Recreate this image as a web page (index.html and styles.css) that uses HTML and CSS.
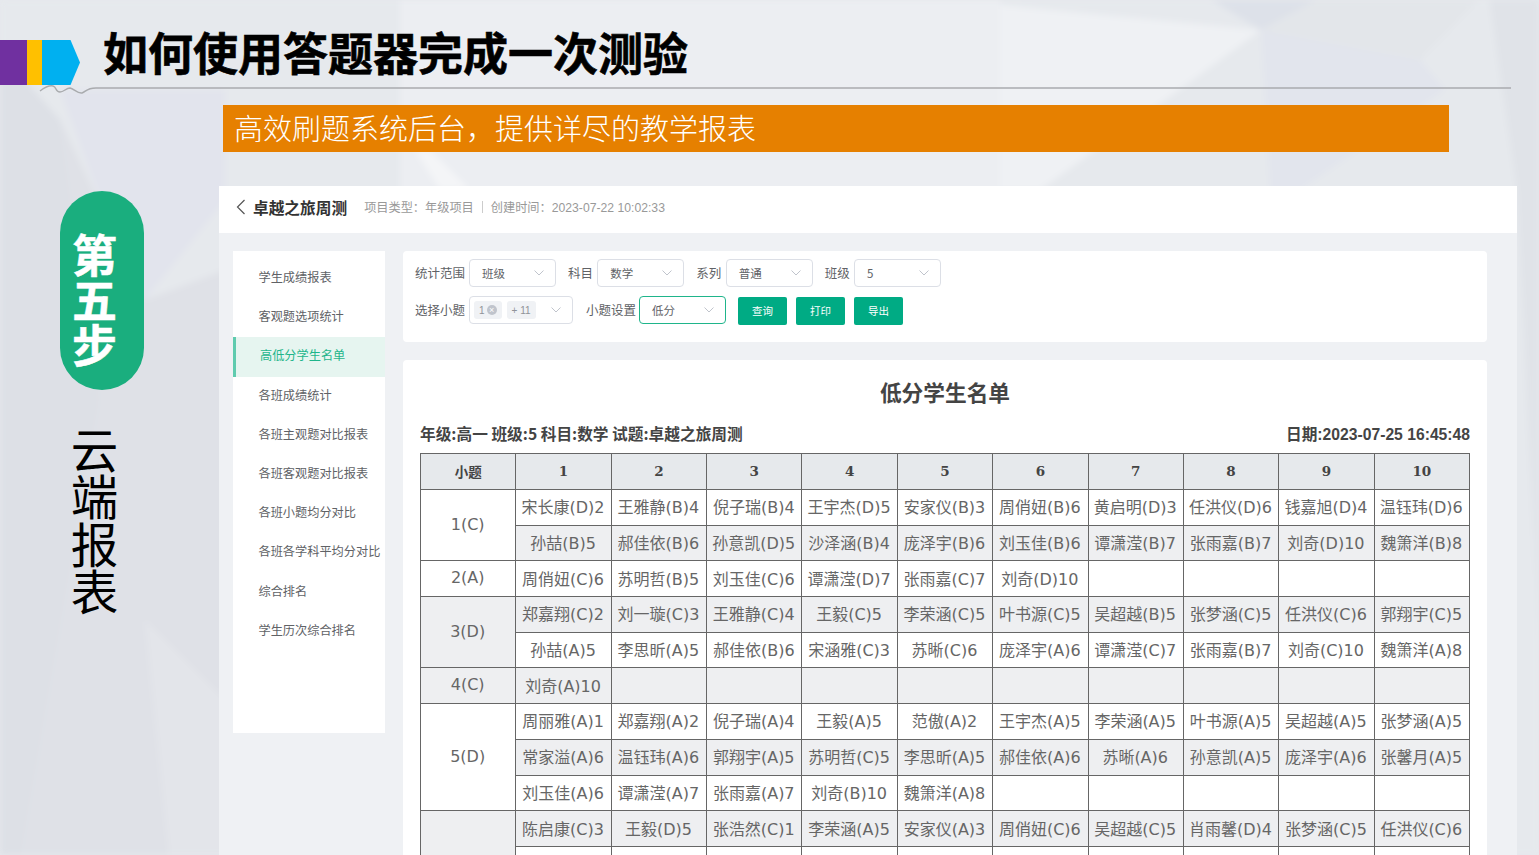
FILE: index.html
```html
<!DOCTYPE html>
<html lang="zh-CN">
<head>
<meta charset="utf-8">
<title>如何使用答题器完成一次测验</title>
<link rel="stylesheet" href="styles.css">
</head>
<body>
<div class="slide">
  <svg class="backdrop" viewBox="0 0 1539 855" preserveAspectRatio="none" aria-hidden="true">
    <polygon points="-10,-10 1550,-10 1550,865 -10,865" fill="#e6e9ed"/>
    <polygon points="400,-10 1000,-10 1000,190 400,190" fill="#eceef2"/>
    <polygon points="1000,5 1261,30 1179,90 1040,190 1000,190" fill="#eff1f4"/>
    <polygon points="1195,-10 1335,-10 1261,30" fill="#dde1e9"/>
    <polygon points="1261,30 1420,60 1488,-10 1335,-10" fill="#e3e6ea"/>
    <polygon points="1261,30 1420,60 1445,90 1300,190 1270,190" fill="#e2e5ed"/>
    <polygon points="1488,-10 1550,-10 1550,865 1517,190" fill="#e0e3e8"/>
    <polygon points="415,150 440,190 470,190 430,150" fill="#f4f5f7"/>
    <polygon points="-10,40 60,120 100,400 20,865 -10,865" fill="#dde0e6"/>
    <polygon points="60,90 225,90 225,200 145,300 100,200" fill="#e2e4ed"/>
    <polygon points="60,120 145,300 225,270 225,865 20,865 100,400" fill="#dfe1e7"/>
    <polygon points="145,620 225,700 225,865 170,865" fill="#e3e5ea"/>
  </svg>

  <header class="head">
    <div class="logo">
      <span class="logo-purple"></span>
      <span class="logo-yellow"></span>
      <span class="logo-blue"></span>
    </div>
    <h1 class="head-title">如何使用答题器完成一次测验</h1>
  </header>
  <svg class="rule" viewBox="0 0 1539 20" aria-hidden="true">
    <path d="M40 6 C44 3 49 0 53 1 C57 2 55 7 60 7 C64 7 66 3 70 3 C74 4 78 9 82 8 C86 7 86 3 96 3 L1511 3" fill="none" stroke="#a9abae" stroke-width="1.5"/>
  </svg>
  <div class="banner">高效刷题系统后台，提供详尽的教学报表</div>

  <div class="main">
    <aside class="steps">
      <div class="pill">第五步</div>
      <div class="step-name">云端报表</div>
    </aside>

    <section class="window">
      <div class="topbar">
        <svg class="back" viewBox="0 0 10 16" aria-hidden="true"><path d="M8.5 1 L1.5 8 L8.5 15" fill="none" stroke="#555" stroke-width="1.2"/></svg>
        <strong class="project">卓越之旅周测</strong>
        <span class="meta">项目类型：年级项目</span>
        <span class="meta-sep"></span>
        <span class="meta">创建时间：2023-07-22 10:02:33</span>
      </div>

      <div class="body">
        <nav class="menu">
          <a class="menu-item">学生成绩报表</a>
          <a class="menu-item">客观题选项统计</a>
          <a class="menu-item active">高低分学生名单</a>
          <a class="menu-item">各班成绩统计</a>
          <a class="menu-item">各班主观题对比报表</a>
          <a class="menu-item">各班客观题对比报表</a>
          <a class="menu-item">各班小题均分对比</a>
          <a class="menu-item">各班各学科平均分对比</a>
          <a class="menu-item">综合排名</a>
          <a class="menu-item">学生历次综合排名</a>
        </nav>

        <div class="content">
          <div class="filters">
            <div class="filter-row">
              <label class="flabel">统计范围</label>
              <div class="select"><span>班级</span><svg class="caret" viewBox="0 0 10 6"><path d="M0.5 0.5 L5 5 L9.5 0.5"/></svg></div>
              <label class="flabel l2">科目</label>
              <div class="select"><span>数学</span><svg class="caret" viewBox="0 0 10 6"><path d="M0.5 0.5 L5 5 L9.5 0.5"/></svg></div>
              <label class="flabel l2">系列</label>
              <div class="select"><span>普通</span><svg class="caret" viewBox="0 0 10 6"><path d="M0.5 0.5 L5 5 L9.5 0.5"/></svg></div>
              <label class="flabel l2">班级</label>
              <div class="select"><span>5</span><svg class="caret" viewBox="0 0 10 6"><path d="M0.5 0.5 L5 5 L9.5 0.5"/></svg></div>
            </div>
            <div class="filter-row">
              <label class="flabel">选择小题</label>
              <div class="select multi">
                <span class="tag">1<i class="tag-x">×</i></span>
                <span class="tag">+ 11</span>
                <svg class="caret" viewBox="0 0 10 6"><path d="M0.5 0.5 L5 5 L9.5 0.5"/></svg>
              </div>
              <label class="flabel l3">小题设置</label>
              <div class="select focus"><span>低分</span><svg class="caret" viewBox="0 0 10 6"><path d="M0.5 0.5 L5 5 L9.5 0.5"/></svg></div>
              <div class="buttons">
                <button class="btn">查询</button>
                <button class="btn">打印</button>
                <button class="btn">导出</button>
              </div>
            </div>
          </div>

          <div class="report">
            <h2 class="report-title">低分学生名单</h2>
            <div class="report-info">
              <span>年级:高一 班级:5 科目:数学 试题:卓越之旅周测</span>
              <span>日期:2023-07-25 16:45:48</span>
            </div>
            <table class="grid">
              <thead>
                <tr><th>小题</th><th>1</th><th>2</th><th>3</th><th>4</th><th>5</th><th>6</th><th>7</th><th>8</th><th>9</th><th>10</th></tr>
              </thead>
              <tbody>
                <tr><td rowspan="2">1(C)</td><td>宋长康(D)2</td><td>王雅静(B)4</td><td>倪子瑞(B)4</td><td>王宇杰(D)5</td><td>安家仪(B)3</td><td>周俏妞(B)6</td><td>黄启明(D)3</td><td>任洪仪(D)6</td><td>钱嘉旭(D)4</td><td>温钰玮(D)6</td></tr>
                <tr><td>孙喆(B)5</td><td>郝佳依(B)6</td><td>孙意凯(D)5</td><td>沙泽涵(B)4</td><td>庞泽宇(B)6</td><td>刘玉佳(B)6</td><td>谭潇滢(B)7</td><td>张雨嘉(B)7</td><td>刘奇(D)10</td><td>魏箫洋(B)8</td></tr>
                <tr><td>2(A)</td><td>周俏妞(C)6</td><td>苏明哲(B)5</td><td>刘玉佳(C)6</td><td>谭潇滢(D)7</td><td>张雨嘉(C)7</td><td>刘奇(D)10</td><td></td><td></td><td></td><td></td></tr>
                <tr><td rowspan="2">3(D)</td><td>郑嘉翔(C)2</td><td>刘一璇(C)3</td><td>王雅静(C)4</td><td>王毅(C)5</td><td>李荣涵(C)5</td><td>叶书源(C)5</td><td>吴超越(B)5</td><td>张梦涵(C)5</td><td>任洪仪(C)6</td><td>郭翔宇(C)5</td></tr>
                <tr><td>孙喆(A)5</td><td>李思昕(A)5</td><td>郝佳依(B)6</td><td>宋涵雅(C)3</td><td>苏晰(C)6</td><td>庞泽宇(A)6</td><td>谭潇滢(C)7</td><td>张雨嘉(B)7</td><td>刘奇(C)10</td><td>魏箫洋(A)8</td></tr>
                <tr><td>4(C)</td><td>刘奇(A)10</td><td></td><td></td><td></td><td></td><td></td><td></td><td></td><td></td><td></td></tr>
                <tr><td rowspan="3">5(D)</td><td>周丽雅(A)1</td><td>郑嘉翔(A)2</td><td>倪子瑞(A)4</td><td>王毅(A)5</td><td>范傲(A)2</td><td>王宇杰(A)5</td><td>李荣涵(A)5</td><td>叶书源(A)5</td><td>吴超越(A)5</td><td>张梦涵(A)5</td></tr>
                <tr><td>常家溢(A)6</td><td>温钰玮(A)6</td><td>郭翔宇(A)5</td><td>苏明哲(C)5</td><td>李思昕(A)5</td><td>郝佳依(A)6</td><td>苏晰(A)6</td><td>孙意凯(A)5</td><td>庞泽宇(A)6</td><td>张馨月(A)5</td></tr>
                <tr><td>刘玉佳(A)6</td><td>谭潇滢(A)7</td><td>张雨嘉(A)7</td><td>刘奇(B)10</td><td>魏箫洋(A)8</td><td></td><td></td><td></td><td></td><td></td></tr>
                <tr><td rowspan="2"></td><td>陈启康(C)3</td><td>王毅(D)5</td><td>张浩然(C)1</td><td>李荣涵(A)5</td><td>安家仪(A)3</td><td>周俏妞(C)6</td><td>吴超越(C)5</td><td>肖雨馨(D)4</td><td>张梦涵(C)5</td><td>任洪仪(C)6</td></tr>
                <tr><td></td><td></td><td></td><td></td><td></td><td></td><td></td><td></td><td></td><td></td></tr>
              </tbody>
            </table>
          </div>
        </div>
      </div>
    </section>
  </div>
</div>
</body>
</html>
```

FILE: styles.css
```css
* { box-sizing: border-box; }
html, body { margin: 0; padding: 0; }
body {
  font-family: "DejaVu Sans", "Noto Sans CJK SC", sans-serif;
  color: #606266;
}
.slide {
  position: relative;
  width: 1539px;
  height: 855px;
  overflow: hidden;
  background: #e6e9ed;
}
.backdrop {
  position: absolute;
  inset: 0;
  width: 100%;
  height: 100%;
  filter: blur(3px);
}
.head, .rule, .banner, .main { position: relative; }

.head {
  display: flex;
  align-items: flex-start;
  height: 85px;
}
.logo {
  display: flex;
  width: 80px;
  height: 45px;
  margin-top: 40px;
}
.logo-purple { width: 27px; background: #7030a0; }
.logo-yellow { width: 15px; background: #ffc000; }
.logo-blue {
  width: 38px;
  background: #00b0f0;
  clip-path: polygon(0 0, 75% 0, 100% 50%, 75% 100%, 0 100%);
}
.head-title {
  margin: 21px 0 0 23px;
  font: 700 45px/62px "Noto Sans CJK SC", sans-serif;
  color: #000;
  -webkit-text-stroke: 0.6px #000;
  white-space: nowrap;
}
.rule {
  display: block;
  width: 1539px;
  height: 20px;
}
.banner {
  width: 1226px;
  height: 47px;
  margin-left: 223px;
  padding-left: 11px;
  background: #e68000;
  color: #fff;
  font: 300 29px/44px "Noto Sans CJK SC", sans-serif;
  white-space: nowrap;
}

.main {
  display: flex;
  margin-top: 34px;
}
.steps {
  width: 219px;
  padding: 5px 0 0 60px;
}
.pill {
  width: 84px;
  height: 199px;
  padding: 20px 16px 0 0;
  border-radius: 42px;
  background: #1aae7e;
  color: #fff;
  font: 700 45px/68px "Noto Sans CJK SC", sans-serif;
  -webkit-text-stroke: 0.5px #fff;
  writing-mode: vertical-rl;
  text-align: center;
}
.step-name {
  width: 84px;
  height: 200px;
  margin-top: 36px;
  padding-right: 16px;
  color: #000;
  font: 400 47.5px/68px "Noto Sans CJK SC", sans-serif;
  writing-mode: vertical-rl;
}

.window {
  width: 1298px;
  height: 669px;
  background: #eff1f4;
}
.topbar {
  display: flex;
  align-items: center;
  height: 47px;
  padding: 0 0 5px 17px;
  background: #fff;
}
.back { width: 10px; height: 16px; margin-right: 7px; }
.project {
  font: 700 15.7px "Noto Sans CJK SC", sans-serif;
  color: #333;
  margin-right: 17px;
}
.meta {
  font: 12.2px "Liberation Sans", "Noto Sans CJK SC", sans-serif;
  color: #999;
}
.meta-sep {
  width: 1px;
  height: 12px;
  margin: 0 8px;
  background: #ccc;
}

.body {
  display: flex;
  gap: 18px;
  padding: 18px 30px 0 14px;
}
.menu {
  width: 152px;
  height: 482px;
  background: #fff;
  padding-top: 8px;
  flex: none;
}
.menu-item {
  display: block;
  height: 39.2px;
  padding-left: 25.5px;
  font: 12.2px/36.4px "Noto Sans CJK SC", sans-serif;
  color: #606266;
  white-space: nowrap;
}
.menu-item.active {
  padding-left: 24px;
  background: #e6f5f0;
  border-left: 3px solid #5fcbae;
  color: #1fb58b;
}

.content { width: 1084px; }
.filters {
  height: 91px;
  padding: 8px 0 0 12px;
  background: #fff;
  border-radius: 4px;
}
.filter-row {
  display: flex;
  align-items: center;
  height: 28px;
  margin-bottom: 9px;
}
.flabel {
  width: 50px;
  margin-right: 4px;
  font: 12.5px "Noto Sans CJK SC", sans-serif;
  color: #606266;
  white-space: nowrap;
  position: relative;
  top: -1px;
}
.flabel.l2 { width: 25.33px; margin-left: 12px; }
.flabel.l3 { margin-left: 13px; margin-right: 3px; }
.select {
  display: flex;
  align-items: center;
  justify-content: space-between;
  width: 87px;
  height: 28px;
  padding: 0 11px 0 12px;
  background: #fff;
  border: 1px solid #dcdfe6;
  border-radius: 4px;
  font: 11.5px "Noto Sans CJK SC", sans-serif;
  color: #606266;
}
.select.focus { border-color: #1fb58b; }
.select.multi {
  width: 104px;
  justify-content: flex-start;
  gap: 5px;
  padding: 0 11px 0 4px;
}
.select.multi .caret { margin-left: auto; }
.caret { width: 10px; height: 6px; fill: none; stroke: #c0c4cc; stroke-width: 1; }
.tag {
  display: flex;
  align-items: center;
  justify-content: center;
  gap: 2px;
  height: 18px;
  padding: 0 5px;
  background: #f0f2f5;
  border-radius: 3px;
  color: #909399;
  font: 10px "Liberation Sans", sans-serif;
}
.tag-x {
  width: 10px;
  height: 10px;
  border-radius: 50%;
  background: #c0c4cc;
  color: #fff;
  font: 9px/10px "Liberation Sans", sans-serif;
  text-align: center;
}
.buttons { display: flex; gap: 9px; margin-left: 12px; padding-top: 1px; }
.btn {
  width: 49px;
  height: 28px;
  padding: 0;
  border: 0;
  border-radius: 2px;
  background: #00ab84;
  color: #fff;
  font: 10.5px "Noto Sans CJK SC", sans-serif;
}

.report {
  margin-top: 18px;
  height: 520px;
  padding: 0 17px;
  background: #fff;
  border-radius: 4px;
}
.report-title {
  margin: 0;
  height: 65px;
  text-align: center;
  font: 700 21.7px/64px "Noto Sans CJK SC", sans-serif;
  color: #444;
}
.report-info {
  display: flex;
  justify-content: space-between;
  align-items: baseline;
  height: 28px;
  font: 700 15.7px/18px "Noto Sans CJK SC", sans-serif;
  color: #444;
}
.report-info span:last-child { font-family: "Liberation Sans", "Noto Sans CJK SC", sans-serif; }

.grid {
  width: 1050px;
  table-layout: fixed;
  border-collapse: collapse;
  font: 16px "DejaVu Sans", "Noto Sans CJK SC", sans-serif;
  color: #666;
  text-align: center;
}
.grid th {
  height: 36px;
  padding: 0 0 2px;
  background: #e6e9ec;
  border: 1px solid #666;
  font: 700 13.5px "DejaVu Serif", "Noto Sans CJK SC", serif;
  color: #444;
}
.grid td {
  height: 35.7px;
  padding: 0 1px 2px 0;
  border: 1px solid #666;
  white-space: nowrap;
}
.grid tbody tr:nth-child(even) td { background: #eeeff1; }
.grid tbody tr:nth-child(odd) td { background: #fff; }
```
